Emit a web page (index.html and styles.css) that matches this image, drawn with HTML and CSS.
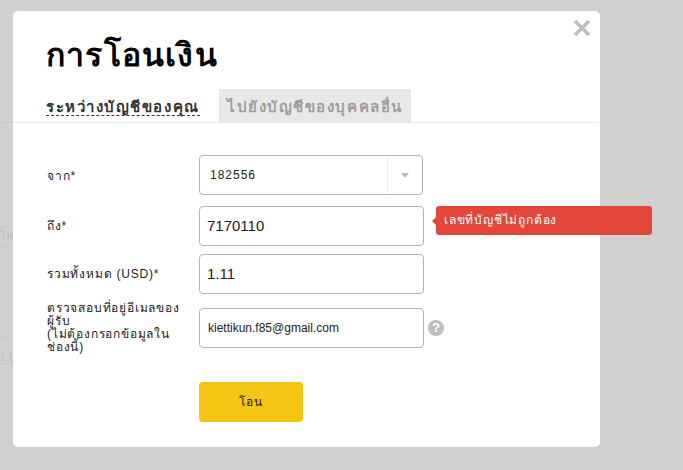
FILE: index.html
```html
<!DOCTYPE html>
<html lang="th">
<head>
<meta charset="utf-8">
<title>การโอนเงิน</title>
<link rel="stylesheet" href="styles.css">
</head>
<body>
<div class="backdrop">
  <div class="ghost ghost-a"></div>
  <div class="ghost ghost-b"><span class="ghost-text">ไทย</span></div>
  <div class="ghost ghost-c"><span class="ghost-text ghost-ll">LL</span></div>
</div>
<main class="modal">
  <button class="close" aria-label="close">
    <svg width="18" height="18" viewBox="0 0 18 18"><path d="M2 2L16 16M16 2L2 16" stroke="#bdbdbd" stroke-width="3.6" fill="none"/></svg>
  </button>
  <h1 class="title">การโอนเงิน</h1>
  <nav class="tabs">
    <a class="tab tab-active"><span>ระหว่างบัญชีของคุณ</span></a>
    <a class="tab tab-other">ไปยังบัญชีของบุคคลอื่น</a>
  </nav>
  <form class="form">
    <div class="row row-first">
      <label class="label">จาก*</label>
      <div class="select">
        <span class="select-value">182556</span>
        <span class="select-arrow"><i></i></span>
      </div>
    </div>
    <div class="row row-to">
      <label class="label label-up">ถึง*</label>
      <div class="input input-big">7170110</div>
      <div class="error">เลขที่บัญชีไม่ถูกต้อง</div>
    </div>
    <div class="row row-amount">
      <label class="label label-up">รวมทั้งหมด (USD)*</label>
      <div class="input input-big">1.11</div>
    </div>
    <div class="row row-email">
      <label class="label label-multi">ตรวจสอบที่อยู่อีเมลของผู้รับ<br>(ไม่ต้องกรอกข้อมูลในช่องนี้)</label>
      <div class="input input-small">kiettikun.f85@gmail.com</div>
      <span class="help">?</span>
    </div>
    <div class="row row-submit">
      <span class="label"></span>
      <button class="submit" type="button">โอน</button>
    </div>
  </form>
</main>
</body>
</html>
```
FILE: styles.css
```css
* { box-sizing: border-box; }
html, body { margin: 0; height: 100%; }
body {
  width: 683px;
  height: 470px;
  overflow: hidden;
  background: #d0d0d0;
  font-family: "Liberation Sans", "Noto Sans", sans-serif;
  position: relative;
  padding: 11px 0 0 13px;
}
.backdrop { position: absolute; inset: 0; overflow: hidden; }
.ghost { position: absolute; left: 0; width: 60px; border-top: 1px solid #c8c8c8; color: #c4c4c4; white-space: nowrap; }
.ghost-a { top: 122px; }
.ghost-b { top: 226px; height: 21px; border-bottom: 1px solid #c8c8c8; }
.ghost-c { top: 337px; height: 26px; }
.ghost-text { display: block; font-size: 12px; line-height: 19px; font-weight: 700; }
.ghost-ll { font-size: 14px; font-weight: 400; margin: 12px 0 0 1px; line-height: 13px; border-bottom: 1px dashed #c4c4c4; }
.modal {
  position: relative;
  width: 587px;
  height: 436px;
  background: #fff;
  border-radius: 5px;
  padding: 22px 0 0;
}
.close {
  position: absolute;
  top: 8px;
  right: 5px;
  width: 27px;
  height: 20px;
  padding: 0;
  border: 0;
  background: none;
  display: block;
}
.title {
  margin: 0 0 0 33px;
  font-size: 32px;
  line-height: 44px;
  font-weight: 700;
  color: #000;
  letter-spacing: 1.2px;
}
.tabs {
  display: flex;
  height: 34px;
  margin: 12px 2px 0 0;
  padding-left: 33px;
  border-bottom: 1px solid #e8e8e8;
}
.tab {
  font-size: 15px;
  font-weight: 700;
  letter-spacing: 1.55px;
  line-height: 35px;
  white-space: nowrap;
}
.tab-active { color: #333; width: 173px; }
.tab-active span { display: inline-block; line-height: 20px; padding-top: 7px; height: 26px; border-bottom: 1px dashed #333; }
.tab-other { background: #e8e8e8; color: #9e9e9e; padding: 0 8px; width: 192px; height: 33px; }
.form { padding: 32px 0 0 33px; }
.row { display: flex; align-items: center; position: relative; }
.row-to { margin-top: 11px; }
.row-amount { margin-top: 8px; }
.row-email { margin-top: 8px; }
.row-submit { margin-top: 28px; }
.label {
  width: 153px;
  flex: none;
  font-size: 12px;
  letter-spacing: 0.8px;
  padding-left: 1px;
  color: #222;
}
.label-up { padding-bottom: 2px; }
.label-multi { line-height: 13px; padding-right: 14px; }
.select, .input {
  border: 1px solid #b5b5b0;
  border-radius: 4px;
  height: 40px;
  background: #fff;
  color: #222;
}
.select { width: 224px; display: flex; align-items: center; }
.select-value { flex: 1; padding-left: 10px; font-size: 12px; letter-spacing: 1px; }
.select-arrow { width: 35px; height: 38px; border-left: 1px solid #eee; display: flex; align-items: center; justify-content: center; }
.select-arrow i { width: 0; height: 0; border: 4px solid transparent; border-top: 5px solid #b8b8b8; border-bottom: 0; }
.input { width: 225px; display: flex; align-items: center; padding-left: 8px; }
.input-big { font-size: 15px; padding-left: 7px; padding-bottom: 2px; }
.input-small { font-size: 12px; }
.error {
  position: absolute;
  left: 390px;
  top: 0;
  width: 216px;
  height: 29px;
  background: #e34739;
  color: #fff;
  border-radius: 3px;
  font-size: 12px;
  font-weight: 400;
  letter-spacing: 0.8px;
  line-height: 28px;
  padding-left: 8px;
}
.error::before {
  content: "";
  position: absolute;
  left: -4px;
  top: 11px;
  border: 4px solid transparent;
  border-left: 0;
  border-right-color: #e34739;
}
.help {
  margin-left: 4px;
  width: 16px;
  height: 16px;
  border-radius: 50%;
  background: #bdbdbd;
  color: #fff;
  font-size: 13px;
  font-weight: 700;
  line-height: 16px;
  text-align: center;
}
.submit {
  width: 104px;
  height: 40px;
  border: 0;
  border-radius: 4px;
  background: #f4c613;
  color: #222;
  font-family: inherit;
  font-size: 12px;
  letter-spacing: 1px;
  padding: 0 0 2px;
}
```
